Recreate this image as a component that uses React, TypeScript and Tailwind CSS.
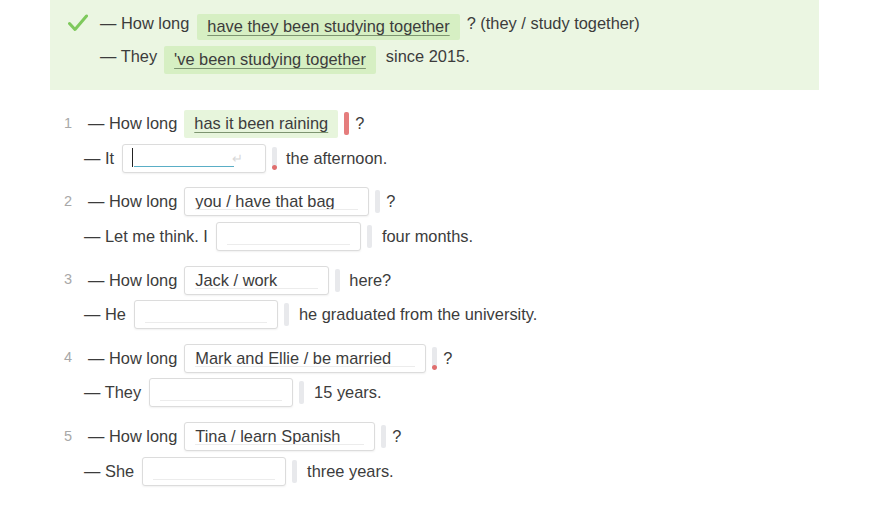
const font = { fontFamily: '"Liberation Sans", Arial, sans-serif' };

function Bar({ state = "empty" }: { state?: "empty" | "wrong" | "partial" }) {
  if (state === "wrong") {
    return <span className="mx-[6px] block h-[23px] w-[5px] rounded-[2px] bg-[#e57d7d]" />;
  }
  return (
    <span className="mx-[6px] flex h-[23px] w-[5px] flex-col justify-end overflow-hidden rounded-[2px] bg-[#e8e9ec]">
      {state === "partial" && <span className="block h-[5px] w-full rounded-full bg-[#e06e6e]" />}
    </span>
  );
}

function Field({ w, value, active }: { w: number; value?: string; active?: boolean }) {
  return (
    <span
      className="relative flex h-[29px] items-center rounded-[3px] border border-[#dcdcdc] bg-white pl-[10px] shadow-[0_1px_2px_rgba(0,0,0,0.06)]"
      style={{ width: w }}
    >
      {value && <span className="text-[#3c3c3c]">{value}</span>}
      {active ? (
        <>
          <span className="absolute left-[9px] top-[3px] h-[19px] w-px bg-[#222]" />
          <span className="absolute bottom-[5px] left-[11px] h-px w-[100px] bg-[#5aaec6]" />
          <span className="absolute right-[22px] top-[4px] text-[13px] text-[#d8d8d8]">↵</span>
        </>
      ) : (
        <span className="absolute bottom-[5px] left-[10px] right-[10px] h-px bg-[#ececec]" />
      )}
    </span>
  );
}

function Item({ n, q, a }: { n: number; q: React.ReactNode; a: React.ReactNode }) {
  return (
    <div className="mb-[9.25px]">
      <div className="flex h-[34px] items-center">
        <span className="w-[24px] text-[14.5px] text-[#a8a8a8]">{n}</span>
        {q}
      </div>
      <div className="flex h-[35px] items-center pl-[20px]">{a}</div>
    </div>
  );
}

const under = "underline decoration-[#7d9470] underline-offset-[3px] [text-decoration-skip-ink:none]";

export default function App() {
  return (
    <div className="h-[513px] w-[882px] overflow-hidden bg-white text-[16.4px] text-[#3c3c3c]" style={font}>
      <div className="ml-[50px] h-[90px] w-[769px] bg-[#ebf6e2] pl-[18px] pt-[7px]">
        <div className="flex h-[33px] items-center">
          <svg width="20" height="18" viewBox="0 0 20 18" className="mr-[12px] -mt-[2px]">
            <polyline points="1.5,9.5 7,15.5 18.5,2" fill="none" stroke="#7ec95c" strokeWidth="3" strokeLinecap="round" strokeLinejoin="round" />
          </svg>
          <span>— How long</span>
          <span className="ml-[8px] mr-[7px] mt-[6px] flex h-[26px] items-center rounded-[2px] bg-[#d6efc3] px-[10px]">
            <span className={under}>have they been studying together</span>
          </span>
          <span>? (they / study together)</span>
        </div>
        <div className="flex h-[33px] items-center pl-[32px]">
          <span>— They</span>
          <span className="ml-[7px] mr-[10px] mt-[6px] flex h-[28px] items-center rounded-[2px] bg-[#d6efc3] px-[10px]">
            <span className={under}>'ve been studying together</span>
          </span>
          <span>since 2015.</span>
        </div>
      </div>

      <div className="pl-[64px] pt-[16.5px]">
        <Item
          n={1}
          q={
            <>
              <span className="mr-[7px]">— How long</span>
              <span className="flex h-[28px] items-center rounded-[2px] bg-[#e7f5dc] px-[10px]">
                <span className={under}>has it been raining</span>
              </span>
              <Bar state="wrong" />
              <span>?</span>
            </>
          }
          a={
            <>
              <span className="mr-[8px]">— It</span>
              <Field w={144} active />
              <Bar state="partial" />
              <span className="ml-[3px]">the afternoon.</span>
            </>
          }
        />
        <Item
          n={2}
          q={
            <>
              <span className="mr-[7px]">— How long</span>
              <Field w={185} value="you / have that bag" />
              <Bar />
              <span>?</span>
            </>
          }
          a={
            <>
              <span className="mr-[8px]">— Let me think. I</span>
              <Field w={145} />
              <Bar />
              <span className="ml-[4px]">four months.</span>
            </>
          }
        />
        <Item
          n={3}
          q={
            <>
              <span className="mr-[7px]">— How long</span>
              <Field w={145} value="Jack / work" />
              <Bar />
              <span className="ml-[3px]">here?</span>
            </>
          }
          a={
            <>
              <span className="mr-[8px]">— He</span>
              <Field w={144} />
              <Bar />
              <span className="ml-[4px]">he graduated from the university.</span>
            </>
          }
        />
        <Item
          n={4}
          q={
            <>
              <span className="mr-[7px]">— How long</span>
              <Field w={242} value="Mark and Ellie / be married" />
              <Bar state="partial" />
              <span>?</span>
            </>
          }
          a={
            <>
              <span className="mr-[8px]">— They</span>
              <Field w={144} />
              <Bar />
              <span className="ml-[4px]">15 years.</span>
            </>
          }
        />
        <Item
          n={5}
          q={
            <>
              <span className="mr-[7px]">— How long</span>
              <Field w={191} value="Tina / learn Spanish" />
              <Bar />
              <span>?</span>
            </>
          }
          a={
            <>
              <span className="mr-[8px]">— She</span>
              <Field w={144} />
              <Bar />
              <span className="ml-[4px]">three years.</span>
            </>
          }
        />
      </div>
    </div>
  );
}
